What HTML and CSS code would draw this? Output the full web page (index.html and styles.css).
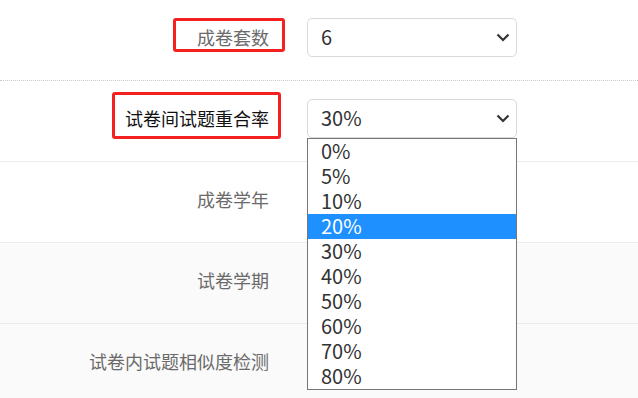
FILE: index.html
```html
<!DOCTYPE html>
<html lang="zh">
  <head>
    <meta charset="UTF-8" />
    <meta name="viewport" content="width=device-width, initial-scale=1.0" />
    <title>组卷设置</title>
    <link rel="stylesheet" href="styles.css">
  </head>
  <body>
    <div class="form">
      <div class="row row-dotted">
        <div class="label"><span class="mark mark-count">成卷套数</span></div>
        <div class="control">
          <div class="select">
            <span>6</span>
            <svg class="arrow" width="14" height="9" viewBox="0 0 14 9"><path d="M1.5 1.5 L7 7 L12.5 1.5" fill="none" stroke="#333" stroke-width="2.2"/></svg>
          </div>
        </div>
      </div>
      <div class="row">
        <div class="label label-dark"><span class="mark mark-rate">试卷间试题重合率</span></div>
        <div class="control">
          <div class="select">
            <span>30%</span>
            <svg class="arrow" width="14" height="9" viewBox="0 0 14 9"><path d="M1.5 1.5 L7 7 L12.5 1.5" fill="none" stroke="#333" stroke-width="2.2"/></svg>
          </div>
          <ul class="listbox">
            <li>0%</li>
            <li>5%</li>
            <li>10%</li>
            <li class="active">20%</li>
            <li>30%</li>
            <li>40%</li>
            <li>50%</li>
            <li>60%</li>
            <li>70%</li>
            <li>80%</li>
          </ul>
        </div>
      </div>
      <div class="row">
        <div class="label">成卷学年</div>
        <div class="control"></div>
      </div>
      <div class="row row-grey">
        <div class="label">试卷学期</div>
        <div class="control"></div>
      </div>
      <div class="row row-grey">
        <div class="label">试卷内试题相似度检测</div>
        <div class="control"></div>
      </div>
    </div>
  </body>
</html>
```

FILE: styles.css
```css
body {
  margin: 0;
  background: #fff;
  font-family: "Noto Sans CJK SC", "Microsoft YaHei", sans-serif;
  color: #333;
}
.form {
  width: 638px;
}
.row {
  display: grid;
  grid-template-columns: 307px 210px;
  height: 81px;
  box-sizing: border-box;
  padding-top: 18px;
  border-bottom: 1px solid #ececec;
}
.row-dotted {
  border-bottom: 1px dotted #c8c8c8;
}
.row-grey {
  background: #fafafa;
}
.label {
  height: 37px;
  display: flex;
  align-items: center;
  justify-content: flex-end;
  padding-right: 38px;
  font-size: 18px;
  color: #6a6a6a;
}
.label-dark {
  color: #111;
}
.mark {
  position: relative;
}
.mark::before {
  content: "";
  position: absolute;
  border: 3px solid #f52020;
  border-radius: 3px;
}
.mark-count::before {
  top: -6px;
  bottom: -2px;
  left: -24px;
  right: -16px;
}
.mark-rate::before {
  top: -13px;
  bottom: -8px;
  left: -13px;
  right: -12px;
}
.control {
  position: relative;
}
.select {
  height: 39px;
  box-sizing: border-box;
  border: 1px solid #d9d9d9;
  border-radius: 5px;
  padding: 0 6px 2px 13px;
  display: flex;
  align-items: center;
  justify-content: space-between;
  font-size: 20px;
  color: #333;
  background: #fff;
}
.arrow {
  margin-top: 2px;
}
.listbox {
  position: absolute;
  z-index: 10;
  top: 39px;
  left: 0;
  width: 210px;
  box-sizing: border-box;
  margin: 0;
  padding: 0;
  list-style: none;
  border: 1px solid #767676;
  background: #fff;
}
.listbox li {
  height: 25px;
  line-height: 23px;
  padding-left: 13px;
  font-size: 20px;
  color: #333;
}
.listbox li.active {
  background: #1e90ff;
  color: #fff;
}
```
